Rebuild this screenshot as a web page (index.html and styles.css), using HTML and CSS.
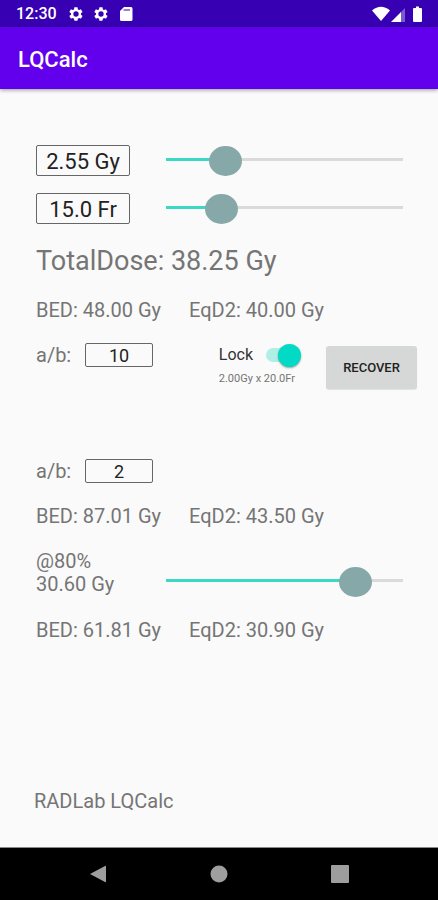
FILE: index.html
```html
<!DOCTYPE html>
<html lang="en">
<head>
<meta charset="utf-8">
<meta name="viewport" content="width=device-width, initial-scale=1">
<title>LQCalc</title>
<link rel="stylesheet" href="styles.css">
</head>
<body>
<div class="status">
  <span class="clock">12:30</span>
  <svg class="status-icon" viewBox="0 0 24 24" aria-hidden="true"><path fill-rule="evenodd" d="M19.4 13c.1-.6.1-1.400 0-2l2.100-1.600c.2-.2.300-.5.100-.7l-2-3.400c-.1-.2-.4-.3-.6-.2l-2.500 1a7.500 7.500 0 0 0-1.700-1l-.4-2.600c0-.3-.2-.5-.5-.5h-4c-.2 0-.4.2-.5.5L9 5.100c-.6.200-1.200.6-1.700 1l-2.500-1c-.2-.1-.5 0-.6.200l-2 3.400c-.1.200-.1.500.1.700L4.500 11a8 8 0 0 0 0 2l-2.200 1.600c-.2.200-.2.500-.1.700l2 3.400c.1.200.4.300.6.200l2.500-1c.5.400 1.100.8 1.700 1l.4 2.600c.1.300.3.500.5.500h4c.3 0 .5-.2.500-.5l.4-2.600c.6-.2 1.200-.6 1.700-1l2.500 1c.2.100.5 0 .6-.2l2-3.400c.1-.2.100-.5-.1-.7zM12 16a4 4 0 1 1 0-8 4 4 0 0 1 0 8z"/></svg>
  <svg class="status-icon" viewBox="0 0 24 24" aria-hidden="true"><path fill-rule="evenodd" d="M19.4 13c.1-.6.1-1.400 0-2l2.100-1.600c.2-.2.300-.5.100-.7l-2-3.400c-.1-.2-.4-.3-.6-.2l-2.500 1a7.500 7.500 0 0 0-1.700-1l-.4-2.600c0-.3-.2-.5-.5-.5h-4c-.2 0-.4.2-.5.5L9 5.100c-.6.200-1.200.6-1.700 1l-2.500-1c-.2-.1-.5 0-.6.200l-2 3.400c-.1.200-.1.500.1.700L4.500 11a8 8 0 0 0 0 2l-2.200 1.600c-.2.200-.2.500-.1.700l2 3.400c.1.200.4.300.6.200l2.500-1c.5.400 1.100.8 1.700 1l.4 2.600c.1.300.3.500.5.500h4c.3 0 .5-.2.500-.5l.4-2.600c.6-.2 1.200-.6 1.700-1l2.500 1c.2.100.5 0 .6-.2l2-3.400c.1-.2.100-.5-.1-.7zM12 16a4 4 0 1 1 0-8 4 4 0 0 1 0 8z"/></svg>
  <svg class="status-icon" viewBox="0 0 16 16" aria-hidden="true"><path fill-rule="evenodd" d="M6 1h7q1.500 0 1.500 1.500v11q0 1.500-1.500 1.500H3.500Q2 15 2 13.500V5zM5.500 3.500v1H12v-1z"/></svg>
  <svg class="signals" viewBox="0 0 52 18" aria-hidden="true"><path d="M0 5.500Q9-2 18 5.500L9 16z"/><path d="M19 17L29 7v10z"/><path class="dim" d="M29 7l4-4v14h-4z"/><path d="M44 1.500h3V3h2q1 0 1 1v12q0 1-1 1h-7q-1 0-1-1V4q0-1 1-1h2z"/></svg>
</div>
<header class="appbar"><h1>LQCalc</h1></header>
<main class="content">
  <div class="sliders">
    <div class="slider-row">
      <input class="field field-large" type="text" value="2.55 Gy" aria-label="Dose per fraction">
      <input class="slider" type="range" min="0" max="10" step="0.05" value="2.5" style="--fill:.25" aria-label="Dose per fraction slider">
    </div>
    <div class="slider-row">
      <input class="field field-large" type="text" value="15.0 Fr" aria-label="Fractions">
      <input class="slider" type="range" min="1" max="60" value="15" style="--fill:.237" aria-label="Fractions slider">
    </div>
  </div>
  <p class="total">TotalDose: 38.25 Gy</p>
  <div class="results"><span>BED: 48.00 Gy</span><span>EqD2: 40.00 Gy</span></div>
  <div class="tools">
    <div class="ratio"><label for="ab1">a/b:</label><input class="field" id="ab1" type="text" value="10"></div>
    <div class="lock">
      <div class="lock-line"><label for="lock">Lock</label><input class="switch" id="lock" type="checkbox" role="switch" checked></div>
      <span class="lock-note">2.00Gy x 20.0Fr</span>
    </div>
    <button class="recover" type="button">RECOVER</button>
  </div>
  <div class="ratio second"><label for="ab2">a/b:</label><input class="field" id="ab2" type="text" value="2"></div>
  <div class="results"><span>BED: 87.01 Gy</span><span>EqD2: 43.50 Gy</span></div>
  <div class="slider-row slider-row-end">
    <label class="percent" for="pct">@80%<br>30.60 Gy</label>
    <input class="slider" id="pct" type="range" min="0" max="100" value="80" style="--fill:.8">
  </div>
  <div class="results"><span>BED: 61.81 Gy</span><span>EqD2: 30.90 Gy</span></div>
  <footer class="credit">RADLab LQCalc</footer>
</main>
<nav class="navbar" aria-label="System">
  <button type="button" aria-label="Back"><svg viewBox="0 0 18 18"><path d="M1 9L16 1q1-.5 1 .5v15q0 1-1 .5z"/></svg></button>
  <button type="button" aria-label="Home"><svg viewBox="0 0 18 18"><circle cx="9" cy="9" r="8.500"/></svg></button>
  <button type="button" aria-label="Recent apps"><svg viewBox="0 0 18 18"><rect width="18" height="18" rx="1"/></svg></button>
</nav>
</body>
</html>
```
FILE: styles.css
```css
* {
  box-sizing: border-box;
}

body {
  margin: 0;
  min-height: 100vh;
  display: flex;
  flex-direction: column;
  background: #fafafa;
  color: #757575;
  font-family: Roboto, "Liberation Sans", sans-serif;
  font-size: 20px;
  line-height: 24px;
}

input,
button {
  margin: 0;
  font-family: inherit;
}

.status {
  display: flex;
  align-items: center;
  gap: 9px;
  height: 27px;
  padding: 1px 14px 0 16px;
  background: #3700b3;
  color: #fff;
  fill: #fff;
}

.clock {
  margin-right: 2px;
  font-size: 16px;
  font-weight: 500;
}

.status-icon {
  width: 16px;
  height: 16px;
}

.signals {
  width: 52px;
  height: 18px;
  margin-left: auto;
}

.dim {
  opacity: 0.35;
}

.appbar {
  display: flex;
  align-items: center;
  height: 62px;
  padding-left: 18px;
  background: #6200ee;
  color: #fff;
  box-shadow: 0 1px 4px rgba(0, 0, 0, 0.4);
}

.appbar h1 {
  margin: 4px 0 0;
  font-size: 22px;
  font-weight: 500;
}

.content {
  flex: 1;
  display: flex;
  flex-direction: column;
  gap: 21px;
  padding: 56px 18px 34px 36px;
}

.sliders {
  display: grid;
  gap: 17px;
}

.slider-row {
  display: grid;
  grid-template-columns: 94px 1fr;
  align-items: center;
  gap: 19px;
}

.slider-row-end {
  align-items: end;
}

.field {
  width: 68px;
  height: 24px;
  padding: 0;
  border: 1px solid #666;
  border-radius: 2px;
  background: transparent;
  color: #222;
  font-size: 18px;
  text-align: center;
}

.field-large {
  width: 100%;
  height: 31px;
  padding-top: 2px;
  font-size: 22px;
}

.slider {
  appearance: none;
  width: 100%;
  height: 30px;
  background: none;
}

.slider::-webkit-slider-runnable-track {
  height: 30px;
  background:
    linear-gradient(#3bd8c6, #3bd8c6) 17px 12px / calc((100% - 33px) * var(--fill)) 3px no-repeat,
    linear-gradient(#dadada, #dadada) 17px 12px / calc(100% - 34px) 3px no-repeat;
}

.slider::-webkit-slider-thumb {
  appearance: none;
  width: 33px;
  height: 30px;
  border-radius: 50%;
  background: #87a8a8;
}

.total {
  margin: 0;
  font-size: 27px;
  line-height: 32px;
}

.results {
  display: grid;
  grid-template-columns: 126px 1fr;
  gap: 27px;
}

.tools {
  display: flex;
  align-items: flex-start;
  height: 46px;
}

.ratio {
  display: grid;
  grid-template-columns: 36px auto;
  gap: 13px;
  justify-content: start;
}

.second {
  margin-top: 49px;
}

.lock {
  margin-left: auto;
  display: grid;
}

.lock-line {
  display: flex;
  align-items: center;
  gap: 13px;
  color: #333;
  font-size: 16px;
}

.switch {
  appearance: none;
  display: flex;
  align-items: center;
  justify-content: flex-end;
  width: 35px;
  height: 14px;
  border-radius: 7px;
  background: #b0efe6;
}

.switch::before {
  content: "";
  width: 23px;
  height: 23px;
  border-radius: 50%;
  background: #03dac5;
  box-shadow: 0 1px 2px rgba(0, 0, 0, 0.35);
}

.switch:not(:checked) {
  justify-content: flex-start;
}

.lock-note {
  font-size: 11px;
}

.recover {
  width: 91px;
  height: 43px;
  margin: 3px 3px 0 25px;
  padding: 0;
  border: 0;
  border-radius: 3px;
  background: #d6d7d7;
  color: #222;
  font-size: 13px;
  font-weight: 500;
  box-shadow: 0 1px 1px rgba(0, 0, 0, 0.1);
}

.percent {
  padding: 1px 0;
  line-height: 23px;
}

.credit {
  margin: auto 0 0 -2px;
}

.navbar {
  display: flex;
  align-items: center;
  justify-content: center;
  gap: 103px;
  height: 53px;
  border-top: 1px solid #8a8a8a;
  background: #000;
}

.navbar button {
  display: flex;
  padding: 0;
  border: 0;
  background: none;
}

.navbar svg {
  width: 18px;
  height: 18px;
  fill: #9e9e9e;
}
```
